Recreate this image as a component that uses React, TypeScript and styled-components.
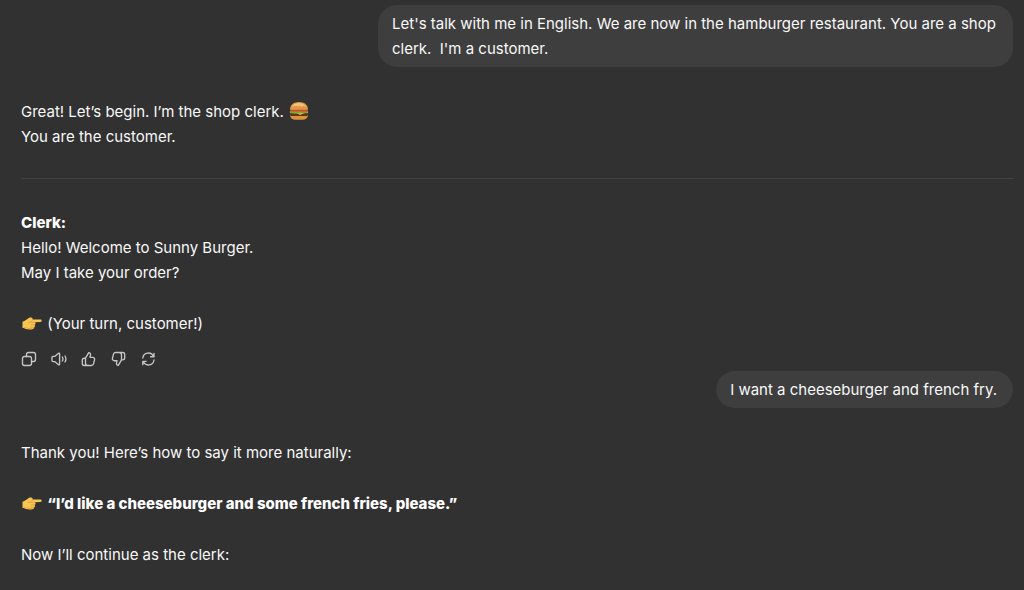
import React from "react";
import styled, { createGlobalStyle } from "styled-components";

const GlobalStyle = createGlobalStyle`
  body {
    margin: 0;
    background: #313131;
    color: #f8f8f8;
    font-family: Inter, "Liberation Sans", sans-serif;
    font-size: 15px;
    line-height: 25px;
  }
`;

const Thread = styled.main`
  display: flex;
  flex-direction: column;
  padding: 5px 11px 0 21px;
`;

const Bubble = styled.div`
  align-self: flex-end;
  box-sizing: border-box;
  max-width: 635px;
  padding: 6px 16px 6px 14px;
  border-radius: 19px;
  background: #3e3e3e;
  white-space: pre-wrap;
`;

const Reply = styled.article`
  display: flex;
  flex-direction: column;
  gap: 26px;
  padding-top: 32px;
`;

const Paragraph = styled.p`
  margin: 0;
`;

const Divider = styled.hr`
  width: 100%;
  height: 1px;
  margin: 3px 0 5px;
  border: 0;
  background: #424242;
`;

const Strong = styled.strong`
  font-weight: 800;
  color: #ffffff;
`;

const Emoji = styled.svg`
  width: 20px;
  height: 20px;
  margin: 0 1px;
  vertical-align: -4px;
`;

const Actions = styled.div`
  display: flex;
  gap: 14px;
  padding: 15px 0 4px;
`;

const ActionButton = styled.button`
  display: flex;
  width: 16px;
  height: 16px;
  padding: 0;
  border: 0;
  background: none;
  color: #c6c6c6;
  cursor: pointer;
`;

const Icon = styled.svg`
  width: 16px;
  height: 16px;
  fill: none;
  stroke: currentColor;
  stroke-width: 1.35;
  stroke-linecap: round;
  stroke-linejoin: round;
`;

const Burger = () => (
  <Emoji viewBox="0 0 20 20" role="img" aria-label="hamburger">
    <path d="M1.2 13.6h17.6c.3 3.2-1.7 5.1-4.6 5.1H5.8c-2.9 0-4.9-1.9-4.6-5.1z" fill="#d9923f" />
    <path d="M1.1 12.2c0-1 .8-1.5 1.8-1.5h14.2c1 0 1.8.5 1.8 1.5v1.3c0 1-.8 1.6-1.8 1.6H2.9c-1 0-1.8-.6-1.8-1.6z" fill="#63301b" />
    <path d="M1.5 11.200h17l-4.400 1.200-3 1.500-3-1.500z" fill="#f8bd35" />
    <path d="M.7 10.700c1-1.500 2.200-1.700 3.500-1.700h12c1.200 0 2.300.4 3.100 1.700.3 1.300-.8 2-1.900 1.500-1.100-.4-1.800.6-3 .4-1.100-.2-1.700-.8-2.900-.3-1.200.5-2.100.6-3.300 0-1.100-.5-1.800.4-3 .4-1 0-1.700-.8-2.800-.4-1 .3-1.800-.3-1.700-1.600z" fill="#79ac35" />
    <path d="M1.500 8h17v1.500c0 .7-.4 1-1 1h-15c-.6 0-1-.3-1-1z" fill="#d84a2b" />
    <path d="M1 8.200C1.2 3.800 4.600 1 10 1s8.800 2.800 9 7.200c0 .4-.4.600-1 .6H2c-.6 0-1-.2-1-.6z" fill="#dc9748" />
    <path d="M2.500 6C3.900 3.100 6.600 2 10 2s6.100 1.100 7.500 4C14.800 5 12.500 4.700 10 4.700S5.200 5 2.500 6z" fill="#efbd72" />
    <path d="M6.500 3.800l.8-.2M10 3l.8.1M13 4l.7.3M8.700 5.100h.8M11.800 5.400h.7" stroke="#ffe0a0" strokeWidth=".6" strokeLinecap="round" />
  </Emoji>
);

const Pointer = () => (
  <Emoji viewBox="0 0 20 20" role="img" aria-label="pointing right">
    <path d="M.5 8.800C3 8 5 6 6.800 4.900c1-.6 2.300-.6 3.400 0 .6.400.5 1.100.1 1.700h8c.9 0 1.400.5 1.400 1.100s-.5 1.200-1.400 1.200l-5.700.4c.9.400 1.100 1.200.9 1.800-.1.500-.5.800-.9.900.5.500.6 1.200.3 1.800-.2.400-.6.700-1 .7.2.7-.1 1.300-.7 1.500-2.300.8-5.200.6-7.200.1-1.100-.4-2-1-3.500-1z" fill="#f8c552" />
    <path d="M6.200 9.500c1.400.2 2.700-.4 3.500-1.500l1.100-1.500M9.300 9.400l3.600-.1M9.300 11.900h3.300M8.800 14.200h3.100" fill="none" stroke="#dc9835" strokeWidth=".7" strokeLinecap="round" />
    <path d="M1.500 14.500c3 .2 5.200 1.500 9.100.9" fill="none" stroke="#e59d33" strokeWidth=".8" />
  </Emoji>
);

const actions = [
  {
    label: "Copy",
    art: (
      <>
        <rect x="1.500" y="5.500" width="9" height="9" rx="2" />
        <path d="M5.500 5.500v-2a2 2 0 0 1 2-2h5a2 2 0 0 1 2 2v5a2 2 0 0 1-2 2h-2" />
      </>
    ),
  },
  {
    label: "Read aloud",
    art: (
      <>
        <path d="M1 6.400c0-.6.4-1 1-1h1.700L7.500 2.300c.5-.4 1.100-.1 1.100.5v10.400c0 .6-.6.900-1.100.5l-3.800-3.100H2c-.6 0-1-.4-1-1z" />
        <path d="M11.300 6c.8 1.200.8 2.800 0 4M14 5c1.200 1.900 1.200 4.100 0 6" />
      </>
    ),
  },
  {
    label: "Good response",
    art: (
      <path d="M4.500 7.200 7.700 1.600c1.300 0 2.100 1.200 1.800 2.500L9 6.300h2.700c1.300 0 2.200 1.200 1.900 2.400l-1.100 4.200c-.3 1-1.100 1.600-2.100 1.600H3.300c-1.100 0-2-.9-2-2V9.200c0-1.100.9-2 2-2zM4.500 7.200v4.900c0 1.400.7 2.400 2 2.400" />
    ),
  },
  {
    label: "Bad response",
    art: (
      <path d="M10.500 8.800 7.300 14.400c-1.300 0-2.100-1.200-1.800-2.500L6 9.700H3.300C2 9.700 1.100 8.500 1.400 7.300l1.100-4.200c.3-1 1.100-1.600 2.100-1.600h7.100c1.100 0 2 .9 2 2v3.300c0 1.100-.9 2-2 2zM10.500 8.800V3.900c0-1.400-.7-2.400-2-2.400" />
    ),
  },
  {
    label: "Regenerate",
    art: (
      <>
        <path d="M1.800 7A5.600 5.600 0 0 1 12.500 5.400M13 2.300v3.400H9.600" />
        <path d="M13 9A5.600 5.600 0 0 1 2.300 10.600M1.800 13.700v-3.400h3.400" />
      </>
    ),
  },
];

export default function App() {
  return (
    <>
      <GlobalStyle />
      <Thread>
        <Bubble>
          {"Let's talk with me in English. We are now in the hamburger restaurant. You are a shop clerk.  I'm a customer."}
        </Bubble>
        <Reply>
          <Paragraph>
            Great! Let’s begin. I’m the shop clerk. <Burger />
            <br />
            You are the customer.
          </Paragraph>
          <Divider />
          <Paragraph>
            <Strong>Clerk:</Strong>
            <br />
            Hello! Welcome to Sunny Burger.
            <br />
            May I take your order?
          </Paragraph>
          <Paragraph>
            <Pointer /> (Your turn, customer!)
          </Paragraph>
        </Reply>
        <Actions>
          {actions.map(({ label, art }) => (
            <ActionButton key={label} type="button" aria-label={label}>
              <Icon viewBox="0 0 16 16" aria-hidden="true">
                {art}
              </Icon>
            </ActionButton>
          ))}
        </Actions>
        <Bubble>I want a cheeseburger and french fry.</Bubble>
        <Reply>
          <Paragraph>Thank you! Here’s how to say it more naturally:</Paragraph>
          <Paragraph>
            <Pointer /> <Strong>“I’d like a cheeseburger and some french fries, please.”</Strong>
          </Paragraph>
          <Paragraph>Now I’ll continue as the clerk:</Paragraph>
        </Reply>
      </Thread>
    </>
  );
}
